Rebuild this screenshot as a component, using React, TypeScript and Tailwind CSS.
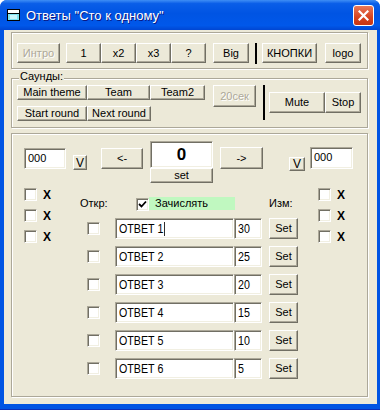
import React from "react";

const raised =
  "flex items-center justify-center bg-[#ece9d8] border border-t-white border-l-white border-r-[#716f64] border-b-[#716f64] shadow-[inset_-1px_-1px_0_#aca899] text-[11px] leading-none";
const sunken =
  "bg-white border border-t-[#aca899] border-l-[#aca899] border-r-white border-b-white shadow-[inset_1px_1px_0_#716f64,inset_-1px_-1px_0_#f1efe2]";
const frame = "border border-[#aca899] shadow-[inset_1px_1px_0_#fff,1px_1px_0_#fff]";

function Btn({
  children,
  className = "",
  disabled = false,
}: {
  children: React.ReactNode;
  className?: string;
  disabled?: boolean;
}) {
  return (
    <div
      className={`${raised} ${
        disabled ? "text-[#aca899] [text-shadow:1px_1px_0_#fff]" : "text-black"
      } ${className}`}
    >
      {children}
    </div>
  );
}

function Check({ checked = false }: { checked?: boolean }) {
  return (
    <div className={`${sunken} w-[13px] h-[13px] shrink-0 flex items-center justify-center`}>
      {checked ? (
        <svg width="9" height="9" viewBox="0 0 9 9">
          <path d="M1 4 L3.5 6.5 L8 1.5" fill="none" stroke="#000" strokeWidth="1.8" />
        </svg>
      ) : null}
    </div>
  );
}

function CheckX() {
  return (
    <div className="flex items-center h-[13px]">
      <Check />
      <span className="ml-[6px] text-[12px] font-bold leading-none text-black">X</span>
    </div>
  );
}

// narrow, tall field text (the original uses a condensed face)
function Narrow({ children }: { children: React.ReactNode }) {
  return (
    <span className="inline-flex items-center whitespace-nowrap origin-left scale-x-[0.82] text-[13px] leading-none text-black">
      {children}
    </span>
  );
}

const answers = [
  { text: "ОТВЕТ 1", pts: "30", cursor: true },
  { text: "ОТВЕТ 2", pts: "25" },
  { text: "ОТВЕТ 3", pts: "20" },
  { text: "ОТВЕТ 4", pts: "15" },
  { text: "ОТВЕТ 5", pts: "10" },
  { text: "ОТВЕТ 6", pts: "5" },
];

export default function App() {
  return (
    <div className="w-[380px] h-[410px] bg-white font-['Liberation_Sans',Arial,sans-serif]">
      <div className="w-[380px] h-[410px] flex flex-col rounded-t-[7px] overflow-hidden bg-[#0054e3] border-b border-[#0a2fb8]">
        {/* title bar */}
        <div className="h-[30px] shrink-0 flex items-center bg-[linear-gradient(to_bottom,#3f8ef5_0%,#0a5ee8_12%,#0054e3_45%,#0058ea_85%,#0046d2_100%)]">
          <svg className="ml-[7px]" width="13" height="12" viewBox="0 0 13 12">
            <rect x="0.5" y="0.5" width="12" height="11" fill="#7fe3f0" stroke="#000" />
            <rect x="1" y="1" width="11" height="3" fill="#ffffff" />
            <rect x="1" y="4" width="11" height="1" fill="#000" />
            <rect x="3" y="6" width="7" height="4" fill="#c9f5fb" />
          </svg>
          <span className="ml-[6px] text-[13px] text-white leading-none [text-shadow:1px_1px_0_#0a1883]">
            Ответы "Сто к одному"
          </span>
          <div className="ml-auto mr-[6px] w-[21px] h-[21px] rounded-[3px] border border-white bg-[linear-gradient(to_bottom,#e9795a,#d6431f_60%,#c83512)] flex items-center justify-center">
            <svg width="11" height="11" viewBox="0 0 11 11">
              <path d="M1.5 1.5 L9.5 9.5 M9.5 1.5 L1.5 9.5" stroke="#fff" strokeWidth="2.2" strokeLinecap="square" />
            </svg>
          </div>
        </div>

        {/* client area */}
        <div className="flex-1 ml-[4px] mr-[3px] mb-[5px] bg-[#ece9d8] flex flex-col">
          {/* group 1 */}
          <div className={`${frame} mt-[2px] ml-[7px] w-[357px] h-[37px] flex items-start pl-[5px] pt-[10px]`}>
            <Btn disabled className="w-[43px] h-[20px]">Интро</Btn>
            <Btn className="ml-[6px] w-[35px] h-[20px]">1</Btn>
            <Btn className="w-[35px] h-[20px]">x2</Btn>
            <Btn className="w-[35px] h-[20px]">x3</Btn>
            <Btn className="w-[35px] h-[20px]">?</Btn>
            <Btn className="ml-[7px] w-[36px] h-[20px]">Big</Btn>
            <div className="ml-[6px] w-[2px] h-[21px] bg-black" />
            <Btn className="ml-[5px] w-[55px] h-[20px]">КНОПКИ</Btn>
            <Btn className="ml-[8px] w-[36px] h-[20px]">logo</Btn>
          </div>

          {/* group 2 */}
          <div className={`${frame} mt-[9px] ml-[7px] w-[357px] h-[50px] flex flex-col`}>
            <div className="-mt-[9px] ml-[7px] px-[1px] self-start bg-[#ece9d8] text-[11px] leading-[13px] text-black">
              Саунды:
            </div>
            <div className="flex items-start pl-[5px] mt-[2px]">
              <div className="flex flex-col gap-[6px]">
                <div className="flex">
                  <Btn className="w-[70px] h-[15px]">Main theme</Btn>
                  <Btn className="w-[63px] h-[15px]">Team</Btn>
                  <Btn className="w-[55px] h-[15px]">Team2</Btn>
                </div>
                <div className="flex">
                  <Btn className="w-[70px] h-[15px]">Start round</Btn>
                  <Btn className="w-[64px] h-[15px]">Next round</Btn>
                </div>
              </div>
              <Btn disabled className="ml-[8px] w-[43px] h-[22px]">20сек</Btn>
              <div className="ml-[7px] w-[2px] h-[35px] bg-black" />
              <div className="flex ml-[4px] mt-[7px]">
                <Btn className="w-[56px] h-[21px]">Mute</Btn>
                <Btn className="w-[36px] h-[21px]">Stop</Btn>
              </div>
            </div>
          </div>

          {/* group 3 */}
          <div className={`${frame} mt-[5px] ml-[7px] w-[357px] h-[264px] flex flex-col`}>
            <div className="flex items-start pl-[12px]">
              <div className={`${sunken} mt-[14px] w-[42px] h-[21px] text-[11px] leading-none pl-[3px] pt-[4px] text-black`}>000</div>
              <Btn className="ml-[7px] mt-[21px] w-[14px] h-[15px] !text-[12px]">V</Btn>
              <Btn className="ml-[14px] mt-[14px] w-[42px] h-[21px]">&lt;-</Btn>
              <div className="ml-[7px] mt-[7px] flex flex-col w-[63px]">
                <div className={`${sunken} h-[27px] flex items-center justify-center text-[17px] font-bold leading-none text-black`}>
                  0
                </div>
                <Btn className="h-[15px]">set</Btn>
              </div>
              <Btn className="ml-[7px] mt-[13px] w-[43px] h-[22px]">-&gt;</Btn>
              <Btn className="ml-[26px] mt-[23px] w-[16px] h-[14px] !text-[12px]">V</Btn>
              <div className={`${sunken} ml-[5px] mt-[13px] w-[43px] h-[22px] text-[11px] leading-none pl-[3px] pt-[4px] text-black`}>000</div>
            </div>

            <div className="flex items-start pl-[12px] mt-[5px]">
              <div className="w-[56px] flex flex-col gap-[8px]">
                <CheckX />
                <CheckX />
                <CheckX />
              </div>

              <div className="w-[238px] mt-[8px] flex flex-col">
                <div className="h-[14px] flex items-center text-[11px] text-black">
                  <span className="w-[56px]">Откр:</span>
                  <div className="mt-[3px]">
                    <Check checked />
                  </div>
                  <div className="w-[86px] h-[13px] bg-[#c0f8c0] pl-[6px] flex items-center leading-none">Зачислять</div>
                  <span className="ml-[34px]">Изм:</span>
                </div>
                <div className="mt-[8px] flex flex-col gap-[7px]">
                  {answers.map((a) => (
                    <div key={a.text} className="h-[21px] flex items-center pl-[7px]">
                      <Check />
                      <div className={`${sunken} ml-[15px] w-[119px] h-[21px] pl-[3px] flex items-center overflow-hidden`}>
                        <Narrow>
                          {a.text}
                          {a.cursor ? <span className="ml-[1px] w-[1.3px] h-[14px] bg-black" /> : null}
                        </Narrow>
                      </div>
                      <div className={`${sunken} w-[28px] h-[21px] pl-[3px] flex items-center overflow-hidden`}>
                        <Narrow>{a.pts}</Narrow>
                      </div>
                      <Btn className="ml-[7px] w-[29px] h-[21px]">Set</Btn>
                    </div>
                  ))}
                </div>
              </div>

              <div className="flex flex-col gap-[8px]">
                <CheckX />
                <CheckX />
                <CheckX />
              </div>
            </div>
          </div>
        </div>
      </div>
    </div>
  );
}
